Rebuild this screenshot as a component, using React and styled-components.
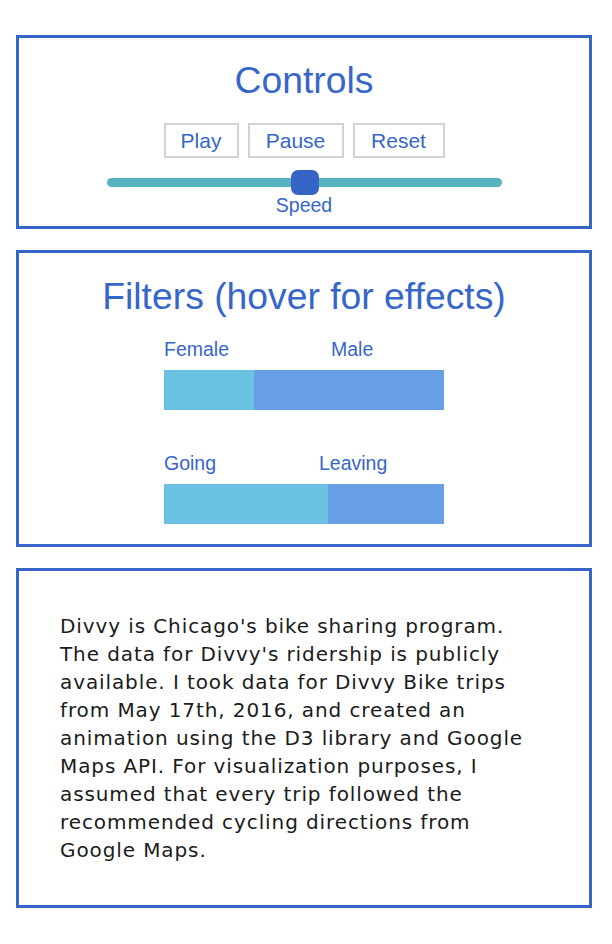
import styled, { createGlobalStyle } from 'styled-components';

const GlobalStyle = createGlobalStyle`
  body {
    margin: 0;
    background: #ffffff;
    font-family: "Liberation Sans", Arial, sans-serif;
  }
`;

const Page = styled.div`
  width: 576px;
  padding: 35px 0 0 16px;
  display: flex;
  flex-direction: column;
  gap: 21px;
`;

const Panel = styled.section`
  border: 3px solid #3766c9;
  display: flex;
  flex-direction: column;
  align-items: center;
  padding: ${(p) => p.$pad};
`;

const Title = styled.h2`
  margin: 0;
  font-size: 37.3px;
  font-weight: 400;
  line-height: 40px;
  color: #3766c9;
`;

const ButtonRow = styled.div`
  display: flex;
  gap: 9px;
  margin-top: 23px;
`;

const Button = styled.button`
  height: 35px;
  width: ${(p) => p.$w}px;
  border: 2px solid #d2d2d2;
  background: #ffffff;
  color: #3766c9;
  font-family: "Liberation Sans", Arial, sans-serif;
  font-size: 21px;
  padding: 0;
`;

const Slider = styled.div`
  position: relative;
  width: 395px;
  height: 9px;
  margin-top: 20px;
  border-radius: 5px;
  background: #56b3c0;
`;

const Thumb = styled.div`
  position: absolute;
  left: 184px;
  top: -8px;
  width: 28px;
  height: 25px;
  border-radius: 7px;
  background: #3563c6;
`;

const SliderLabel = styled.div`
  margin-top: 8px;
  font-size: 19.5px;
  line-height: 20px;
  color: #3766c9;
`;

const Chart = styled.div`
  width: 280px;
  display: flex;
  flex-direction: column;
  margin-top: ${(p) => p.$top}px;
`;

const Labels = styled.div`
  position: relative;
  height: 22px;
  font-size: 19.5px;
  color: #3766c9;
`;

const Label = styled.span`
  position: absolute;
  top: 0;
  left: ${(p) => p.$x}px;
  line-height: 22px;
`;

const Bar = styled.div`
  display: flex;
  height: 40px;
  margin-top: 10px;
`;

const Segment = styled.div`
  height: 100%;
  background: ${(p) => (p.$first ? '#6ac2e3' : '#669fe5')};
`;

const About = styled.p`
  align-self: stretch;
  margin: 0;
  font-family: "DejaVu Sans", sans-serif;
  font-size: 20px;
  letter-spacing: 0.9px;
  line-height: 28px;
  color: #1b1b1b;
  white-space: nowrap;
`;

const filters = [
  { top: 22, labels: ['Female', 'Male'], x: [0, 167], split: 90 },
  { top: 42, labels: ['Going', 'Leaving'], x: [0, 155], split: 164 },
];

const lines = [
  "Divvy is Chicago's bike sharing program.",
  "The data for Divvy's ridership is publicly",
  'available. I took data for Divvy Bike trips',
  'from May 17th, 2016, and created an',
  'animation using the D3 library and Google',
  'Maps API. For visualization purposes, I',
  'assumed that every trip followed the',
  'recommended cycling directions from',
  'Google Maps.',
];

const App = () => (
  <>
    <GlobalStyle />
    <Page>
      <Panel $pad="22px 0 11px">
        <Title>Controls</Title>
        <ButtonRow>
          <Button $w={75}>Play</Button>
          <Button $w={96}>Pause</Button>
          <Button $w={92}>Reset</Button>
        </ButtonRow>
        <Slider>
          <Thumb />
        </Slider>
        <SliderLabel>Speed</SliderLabel>
      </Panel>
      <Panel $pad="23px 0 20px">
        <Title>Filters (hover for effects)</Title>
        {filters.map((f) => (
          <Chart key={f.labels[0]} $top={f.top}>
            <Labels>
              <Label $x={f.x[0]}>{f.labels[0]}</Label>
              <Label $x={f.x[1]}>{f.labels[1]}</Label>
            </Labels>
            <Bar>
              <Segment $first style={{ width: f.split }} />
              <Segment style={{ width: 280 - f.split }} />
            </Bar>
          </Chart>
        ))}
      </Panel>
      <Panel $pad="41px 41px 41px">
        <About>
          {lines.map((l, i) => (
            <span key={i}>
              {l}
              <br />
            </span>
          ))}
        </About>
      </Panel>
    </Page>
  </>
);

export default App;
